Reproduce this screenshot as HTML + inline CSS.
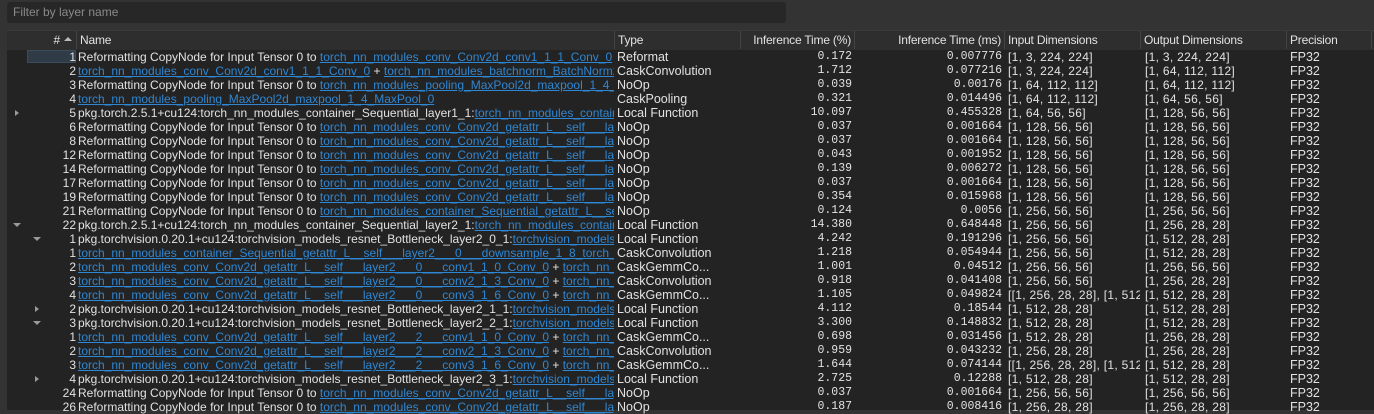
<!DOCTYPE html>
<html><head><meta charset="utf-8"><style>
body{margin:0;width:1374px;height:410px;overflow:hidden;background:#333;font-family:"Liberation Sans",sans-serif;font-size:12px;color:#e2e2e2;position:relative}
.filter{position:absolute;left:7px;top:2px;width:779px;height:21px;background:#272727;border-radius:3px;color:#8a8a8a;line-height:21px;text-indent:6px}
.tbl{position:absolute;left:7px;top:30px;width:1367px;height:380px;background:#232323}
.hd{position:absolute;left:7px;top:30px;width:1367px;height:19px;background:#2e2e2e;border-top:1px solid #3a3a3a}
.h{position:absolute;top:31px;height:18px;line-height:18px;border-right:1px solid #444;white-space:nowrap;overflow:hidden;box-sizing:border-box;padding:0 3px;font-size:12px;letter-spacing:-0.2px}
.r{position:absolute;left:0;width:1374px;height:14px;line-height:14px;white-space:nowrap}
.c{position:absolute;top:0;height:14px;overflow:hidden}
.n{left:0;width:76px;text-align:right}
.nm{left:78px;width:536px}
.t{left:617px;width:138px;font-size:12.5px}
.p{left:760px;width:92px;text-align:right;font-family:"Liberation Mono",monospace;font-size:11.5px}
.ms{left:860px;width:142px;text-align:right;font-family:"Liberation Mono",monospace;font-size:11.5px}
.i{left:1008px;width:132px;letter-spacing:0.3px}
.o{left:1145px;width:140px;letter-spacing:0.3px}
.pr{left:1290px;width:80px;font-size:12.5px}
a{color:#2f86d2;text-decoration:underline}
.ar{position:absolute;top:4px;width:0;height:0}
.rt{border-top:3px solid transparent;border-bottom:3px solid transparent;border-left:4px solid #9a9a9a}
.dn{top:5px;border-left:4px solid transparent;border-right:4px solid transparent;border-top:4px solid #9a9a9a}
</style></head><body>
<div class="filter">Filter by layer name</div>
<div class="tbl"></div>
<div class="hd"></div>
<div class="h" style="left:7px;width:70px;text-align:right;padding-right:16px">#</div>
<div style="position:absolute;left:64px;top:37px;border-left:4px solid transparent;border-right:4px solid transparent;border-bottom:4px solid #bbb"></div>
<div class="h" style="left:77px;width:538px">Name</div>
<div class="h" style="left:615px;width:240px">Type</div>
<div class="h" style="left:740px;width:115px;text-align:right;border-left:1px solid #444">Inference Time (%)</div>
<div class="h" style="left:855px;width:150px;text-align:right">Inference Time (ms)</div>
<div class="h" style="left:1005px;width:136px">Input Dimensions</div>
<div class="h" style="left:1141px;width:146px">Output Dimensions</div>
<div class="h" style="left:1287px;width:85px">Precision</div>
<div style="position:absolute;left:27px;top:50px;width:49px;height:13px;background:#2f3c48;border:1px solid #3d4c5a;box-sizing:border-box"></div>

<div class="r" style="top:50px"><span class="c n">1</span><span class="c nm">Reformatting CopyNode for Input Tensor 0 to <a>torch_nn_modules_conv_Conv2d_conv1_1_1_Conv_0</a> - ..</span><span class="c t">Reformat</span><span class="c p">0.172</span><span class="c ms">0.007776</span><span class="c i">[1, 3, 224, 224]</span><span class="c o">[1, 3, 224, 224]</span><span class="c pr">FP32</span></div>
<div class="r" style="top:64px"><span class="c n">2</span><span class="c nm"><a>torch_nn_modules_conv_Conv2d_conv1_1_1_Conv_0</a> + <a>torch_nn_modules_batchnorm_BatchNorm2d_bn1_1_2_BatchNorm</a></span><span class="c t">CaskConvolution</span><span class="c p">1.712</span><span class="c ms">0.077216</span><span class="c i">[1, 3, 224, 224]</span><span class="c o">[1, 64, 112, 112]</span><span class="c pr">FP32</span></div>
<div class="r" style="top:78px"><span class="c n">3</span><span class="c nm">Reformatting CopyNode for Input Tensor 0 to <a>torch_nn_modules_pooling_MaxPool2d_maxpool_1_4_MaxPool_0</a></span><span class="c t">NoOp</span><span class="c p">0.039</span><span class="c ms">0.00176</span><span class="c i">[1, 64, 112, 112]</span><span class="c o">[1, 64, 112, 112]</span><span class="c pr">FP32</span></div>
<div class="r" style="top:92px"><span class="c n">4</span><span class="c nm"><a>torch_nn_modules_pooling_MaxPool2d_maxpool_1_4_MaxPool_0</a></span><span class="c t">CaskPooling</span><span class="c p">0.321</span><span class="c ms">0.014496</span><span class="c i">[1, 64, 112, 112]</span><span class="c o">[1, 64, 56, 56]</span><span class="c pr">FP32</span></div>
<div class="r" style="top:106px"><span class="ar rt" style="left:15px"></span><span class="c n">5</span><span class="c nm">pkg.torch.2.5.1+cu124:torch_nn_modules_container_Sequential_layer1_1:<a>torch_nn_modules_container_Sequential_layer1</a></span><span class="c t">Local Function</span><span class="c p">10.097</span><span class="c ms">0.455328</span><span class="c i">[1, 64, 56, 56]</span><span class="c o">[1, 128, 56, 56]</span><span class="c pr">FP32</span></div>
<div class="r" style="top:120px"><span class="c n">6</span><span class="c nm">Reformatting CopyNode for Input Tensor 0 to <a>torch_nn_modules_conv_Conv2d_getattr_L__self___layer1___0___conv1</a></span><span class="c t">NoOp</span><span class="c p">0.037</span><span class="c ms">0.001664</span><span class="c i">[1, 128, 56, 56]</span><span class="c o">[1, 128, 56, 56]</span><span class="c pr">FP32</span></div>
<div class="r" style="top:134px"><span class="c n">8</span><span class="c nm">Reformatting CopyNode for Input Tensor 0 to <a>torch_nn_modules_conv_Conv2d_getattr_L__self___layer1___0___conv2</a></span><span class="c t">NoOp</span><span class="c p">0.037</span><span class="c ms">0.001664</span><span class="c i">[1, 128, 56, 56]</span><span class="c o">[1, 128, 56, 56]</span><span class="c pr">FP32</span></div>
<div class="r" style="top:148px"><span class="c n">12</span><span class="c nm">Reformatting CopyNode for Input Tensor 0 to <a>torch_nn_modules_conv_Conv2d_getattr_L__self___layer1___1___conv1</a></span><span class="c t">NoOp</span><span class="c p">0.043</span><span class="c ms">0.001952</span><span class="c i">[1, 128, 56, 56]</span><span class="c o">[1, 128, 56, 56]</span><span class="c pr">FP32</span></div>
<div class="r" style="top:162px"><span class="c n">14</span><span class="c nm">Reformatting CopyNode for Input Tensor 0 to <a>torch_nn_modules_conv_Conv2d_getattr_L__self___layer1___1___conv2</a></span><span class="c t">NoOp</span><span class="c p">0.139</span><span class="c ms">0.006272</span><span class="c i">[1, 128, 56, 56]</span><span class="c o">[1, 128, 56, 56]</span><span class="c pr">FP32</span></div>
<div class="r" style="top:176px"><span class="c n">17</span><span class="c nm">Reformatting CopyNode for Input Tensor 0 to <a>torch_nn_modules_conv_Conv2d_getattr_L__self___layer1___2___conv1</a></span><span class="c t">NoOp</span><span class="c p">0.037</span><span class="c ms">0.001664</span><span class="c i">[1, 128, 56, 56]</span><span class="c o">[1, 128, 56, 56]</span><span class="c pr">FP32</span></div>
<div class="r" style="top:190px"><span class="c n">19</span><span class="c nm">Reformatting CopyNode for Input Tensor 0 to <a>torch_nn_modules_conv_Conv2d_getattr_L__self___layer1___2___conv2</a></span><span class="c t">NoOp</span><span class="c p">0.354</span><span class="c ms">0.015968</span><span class="c i">[1, 128, 56, 56]</span><span class="c o">[1, 128, 56, 56]</span><span class="c pr">FP32</span></div>
<div class="r" style="top:204px"><span class="c n">21</span><span class="c nm">Reformatting CopyNode for Input Tensor 0 to <a>torch_nn_modules_container_Sequential_getattr_L__self___layer2</a></span><span class="c t">NoOp</span><span class="c p">0.124</span><span class="c ms">0.0056</span><span class="c i">[1, 256, 56, 56]</span><span class="c o">[1, 256, 56, 56]</span><span class="c pr">FP32</span></div>
<div class="r" style="top:218px"><span class="ar dn" style="left:13px"></span><span class="c n">22</span><span class="c nm">pkg.torch.2.5.1+cu124:torch_nn_modules_container_Sequential_layer2_1:<a>torch_nn_modules_container_Sequential_layer2</a></span><span class="c t">Local Function</span><span class="c p">14.380</span><span class="c ms">0.648448</span><span class="c i">[1, 256, 56, 56]</span><span class="c o">[1, 256, 28, 28]</span><span class="c pr">FP32</span></div>
<div class="r" style="top:232px"><span class="ar dn" style="left:33px"></span><span class="c n">1</span><span class="c nm">pkg.torchvision.0.20.1+cu124:torchvision_models_resnet_Bottleneck_layer2_0_1:<a>torchvision_models_resnet_Bottleneck</a></span><span class="c t">Local Function</span><span class="c p">4.242</span><span class="c ms">0.191296</span><span class="c i">[1, 256, 56, 56]</span><span class="c o">[1, 512, 28, 28]</span><span class="c pr">FP32</span></div>
<div class="r" style="top:246px"><span class="c n">1</span><span class="c nm"><a>torch_nn_modules_container_Sequential_getattr_L__self___layer2___0___downsample_1_8_torch_nn_modules_conv</a></span><span class="c t">CaskConvolution</span><span class="c p">1.218</span><span class="c ms">0.054944</span><span class="c i">[1, 256, 56, 56]</span><span class="c o">[1, 512, 28, 28]</span><span class="c pr">FP32</span></div>
<div class="r" style="top:260px"><span class="c n">2</span><span class="c nm"><a>torch_nn_modules_conv_Conv2d_getattr_L__self___layer2___0___conv1_1_0_Conv_0</a> + <a>torch_nn_modules_batchnorm</a></span><span class="c t">CaskGemmCo...</span><span class="c p">1.001</span><span class="c ms">0.04512</span><span class="c i">[1, 256, 56, 56]</span><span class="c o">[1, 256, 56, 56]</span><span class="c pr">FP32</span></div>
<div class="r" style="top:274px"><span class="c n">3</span><span class="c nm"><a>torch_nn_modules_conv_Conv2d_getattr_L__self___layer2___0___conv2_1_3_Conv_0</a> + <a>torch_nn_modules_batchnorm</a></span><span class="c t">CaskConvolution</span><span class="c p">0.918</span><span class="c ms">0.041408</span><span class="c i">[1, 256, 56, 56]</span><span class="c o">[1, 256, 28, 28]</span><span class="c pr">FP32</span></div>
<div class="r" style="top:288px"><span class="c n">4</span><span class="c nm"><a>torch_nn_modules_conv_Conv2d_getattr_L__self___layer2___0___conv3_1_6_Conv_0</a> + <a>torch_nn_modules_batchnorm</a></span><span class="c t">CaskGemmCo...</span><span class="c p">1.105</span><span class="c ms">0.049824</span><span class="c i">[[1, 256, 28, 28], [1, 512, 28, 28]]</span><span class="c o">[1, 512, 28, 28]</span><span class="c pr">FP32</span></div>
<div class="r" style="top:302px"><span class="ar rt" style="left:35px"></span><span class="c n">2</span><span class="c nm">pkg.torchvision.0.20.1+cu124:torchvision_models_resnet_Bottleneck_layer2_1_1:<a>torchvision_models_resnet_Bottleneck</a></span><span class="c t">Local Function</span><span class="c p">4.112</span><span class="c ms">0.18544</span><span class="c i">[1, 512, 28, 28]</span><span class="c o">[1, 512, 28, 28]</span><span class="c pr">FP32</span></div>
<div class="r" style="top:316px"><span class="ar dn" style="left:33px"></span><span class="c n">3</span><span class="c nm">pkg.torchvision.0.20.1+cu124:torchvision_models_resnet_Bottleneck_layer2_2_1:<a>torchvision_models_resnet_Bottleneck</a></span><span class="c t">Local Function</span><span class="c p">3.300</span><span class="c ms">0.148832</span><span class="c i">[1, 512, 28, 28]</span><span class="c o">[1, 512, 28, 28]</span><span class="c pr">FP32</span></div>
<div class="r" style="top:330px"><span class="c n">1</span><span class="c nm"><a>torch_nn_modules_conv_Conv2d_getattr_L__self___layer2___2___conv1_1_0_Conv_0</a> + <a>torch_nn_modules_batchnorm</a></span><span class="c t">CaskGemmCo...</span><span class="c p">0.698</span><span class="c ms">0.031456</span><span class="c i">[1, 512, 28, 28]</span><span class="c o">[1, 256, 28, 28]</span><span class="c pr">FP32</span></div>
<div class="r" style="top:344px"><span class="c n">2</span><span class="c nm"><a>torch_nn_modules_conv_Conv2d_getattr_L__self___layer2___2___conv2_1_3_Conv_0</a> + <a>torch_nn_modules_batchnorm</a></span><span class="c t">CaskConvolution</span><span class="c p">0.959</span><span class="c ms">0.043232</span><span class="c i">[1, 256, 28, 28]</span><span class="c o">[1, 256, 28, 28]</span><span class="c pr">FP32</span></div>
<div class="r" style="top:358px"><span class="c n">3</span><span class="c nm"><a>torch_nn_modules_conv_Conv2d_getattr_L__self___layer2___2___conv3_1_6_Conv_0</a> + <a>torch_nn_modules_batchnorm</a></span><span class="c t">CaskGemmCo...</span><span class="c p">1.644</span><span class="c ms">0.074144</span><span class="c i">[[1, 256, 28, 28], [1, 512, 28, 28]]</span><span class="c o">[1, 512, 28, 28]</span><span class="c pr">FP32</span></div>
<div class="r" style="top:372px"><span class="ar rt" style="left:35px"></span><span class="c n">4</span><span class="c nm">pkg.torchvision.0.20.1+cu124:torchvision_models_resnet_Bottleneck_layer2_3_1:<a>torchvision_models_resnet_Bottleneck</a></span><span class="c t">Local Function</span><span class="c p">2.725</span><span class="c ms">0.12288</span><span class="c i">[1, 512, 28, 28]</span><span class="c o">[1, 512, 28, 28]</span><span class="c pr">FP32</span></div>
<div class="r" style="top:386px"><span class="c n">24</span><span class="c nm">Reformatting CopyNode for Input Tensor 0 to <a>torch_nn_modules_conv_Conv2d_getattr_L__self___layer2___0___conv1</a></span><span class="c t">NoOp</span><span class="c p">0.037</span><span class="c ms">0.001664</span><span class="c i">[1, 256, 56, 56]</span><span class="c o">[1, 256, 56, 56]</span><span class="c pr">FP32</span></div>
<div class="r" style="top:400px"><span class="c n">26</span><span class="c nm">Reformatting CopyNode for Input Tensor 0 to <a>torch_nn_modules_conv_Conv2d_getattr_L__self___layer2___0___conv2</a></span><span class="c t">NoOp</span><span class="c p">0.187</span><span class="c ms">0.008416</span><span class="c i">[1, 256, 28, 28]</span><span class="c o">[1, 256, 28, 28]</span><span class="c pr">FP32</span></div>
</body></html>
